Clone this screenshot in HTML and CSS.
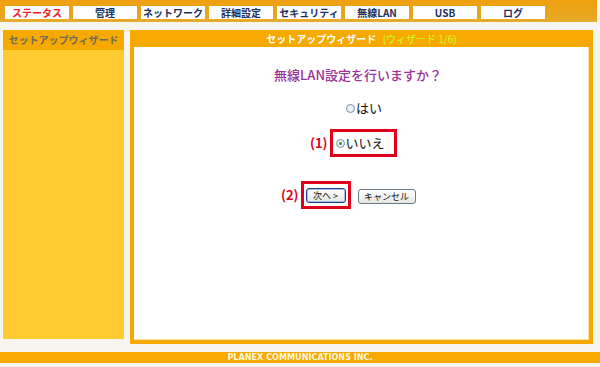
FILE: index.html
```html
<!DOCTYPE html>
<html>
<head>
    <title>セットアップウィザード</title>
    <meta charset="UTF-8">
    <link rel="stylesheet" href="styles.css">
</head>
<body>
    <div class="topbar">
        <div class="tab active">ステータス</div>
        <div class="tab">管理</div>
        <div class="tab">ネットワーク</div>
        <div class="tab">詳細設定</div>
        <div class="tab">セキュリティ</div>
        <div class="tab">無線LAN</div>
        <div class="tab">USB</div>
        <div class="tab">ログ</div>
    </div>
    <div class="page">
        <div class="sidebar">
            <div class="side-head">セットアップウィザード</div>
        </div>
        <div class="panel">
            <div class="panel-head">セットアップウィザード <span class="step">(ウィザード 1/6)</span></div>
            <div class="content">
                <div class="question">無線LAN設定を行いますか？</div>
                <div class="opt-row first">
                    <div class="opt"><span class="radio"></span>はい</div>
                </div>
                <div class="opt-row">
                    <div class="mark">
                        <span class="note">(1)</span>
                        <div class="opt"><span class="radio checked"></span>いいえ</div>
                    </div>
                </div>
                <div class="btn-row">
                    <div class="mark btn-mark">
                        <span class="note">(2)</span>
                        <button type="button" class="btn">次へ &gt;</button>
                    </div>
                    <button type="button" class="btn cancel">キャンセル</button>
                </div>
            </div>
        </div>
    </div>
    <div class="footer">PLANEX COMMUNICATIONS INC.</div>
</body>
</html>
```

FILE: styles.css
```css
body {
    margin: 0;
    background-color: #f6f5f0;
    font-family: "Noto Sans CJK JP", "DejaVu Sans", sans-serif;
    width: 600px;
    height: 367px;
    overflow: hidden;
}
.topbar {
    height: 22px;
    background: linear-gradient(#f0a010, #e9a51c 60%, #e6ac2c);
    display: flex;
    gap: 4px;
    padding: 6px 0 0 5px;
    box-sizing: border-box;
    width: 597px;
}
.tab {
    width: 64px;
    height: 13px;
    background: white;
    color: #1c2f5e;
    font-size: 10px;
    font-weight: bold;
    line-height: 13px;
    text-align: center;
}
.tab.active {
    color: #ee1c25;
}
.page {
    display: flex;
    padding: 8px 0 0 3px;
    gap: 6px;
}
.sidebar {
    width: 121px;
    height: 309px;
    background-color: #ffcb30;
}
.side-head {
    height: 20px;
    background-color: #f6aa00;
    color: #6e6a60;
    font-size: 10px;
    font-weight: bold;
    line-height: 20px;
    text-align: center;
}
.panel {
    width: 463px;
    height: 314px;
    background-color: #f6aa00;
    display: flex;
    flex-direction: column;
    padding: 0 4px 4px 4px;
    box-sizing: border-box;
}
.panel-head {
    height: 17px;
    color: white;
    font-size: 10px;
    font-weight: bold;
    line-height: 17px;
    text-align: center;
}
.step {
    color: #ccff33;
    margin-left: 4px;
    font-weight: normal;
}
.content {
    flex: 1;
    background: white;
    border-right: 1px solid #ffe2a0;
    border-bottom: 1px solid #ffe2a0;
    display: flex;
    flex-direction: column;
    align-items: center;
}
.question {
    margin-top: 19px;
    margin-left: -6px;
    color: #993399;
    font-size: 13px;
    font-weight: 500;
    line-height: 18px;
}
.opt-row {
    display: flex;
    justify-content: center;
    margin-left: 4px;
}
.opt-row.first {
    margin-top: 16px;
    margin-left: 6px;
}
.opt {
    display: flex;
    align-items: center;
    gap: 1px;
    font-size: 13px;
    line-height: 16px;
    color: #111;
}
.radio {
    width: 7px;
    height: 7px;
    border: 1px solid #7a8ea8;
    border-radius: 50%;
    background: #eef2f6;
    display: flex;
    align-items: center;
    justify-content: center;
}
.radio.checked::after {
    content: "";
    width: 3px;
    height: 3px;
    border-radius: 50%;
    background: #2a9a2a;
}
.mark {
    position: relative;
    border: 3px solid #e0001b;
    padding: 3px 4px;
}
.opt-row .mark {
    margin-top: 13px;
    width: 54px;
    padding: 3px 4px 3px 3px;
}
.note {
    position: absolute;
    right: calc(100% + 5px);
    top: 50%;
    transform: translateY(-50%);
    color: #e0001b;
    font-size: 13px;
    font-weight: bold;
    line-height: 16px;
    white-space: nowrap;
}
.btn-row {
    display: flex;
    align-items: center;
    gap: 7px;
    margin-top: 24px;
    margin-left: -6px;
}
.btn-mark {
    display: flex;
    padding: 4px 2px 3px 2px;
}
.btn {
    font-family: "Noto Sans CJK JP", "DejaVu Sans", sans-serif;
    font-size: 9px;
    line-height: 11px;
    height: 15px;
    padding: 0;
    border: 1px solid #6a7890;
    border-radius: 3px;
    background: linear-gradient(#ffffff, #e6e6e0);
    color: #111;
    white-space: nowrap;
}
.btn-mark .btn {
    width: 40px;
    border-color: #1c3f8a;
    box-shadow: inset 0 0 0 1px #a8c0e8;
}
.cancel {
    width: 58px;
    margin-top: 2px;
}
.footer {
    margin-top: 8px;
    height: 11px;
    background-color: #f6aa00;
    color: #fff6dc;
    font-family: "DejaVu Sans Condensed", "DejaVu Sans", sans-serif;
    font-size: 9px;
    font-weight: bold;
    line-height: 11px;
    text-align: center;
}
```
